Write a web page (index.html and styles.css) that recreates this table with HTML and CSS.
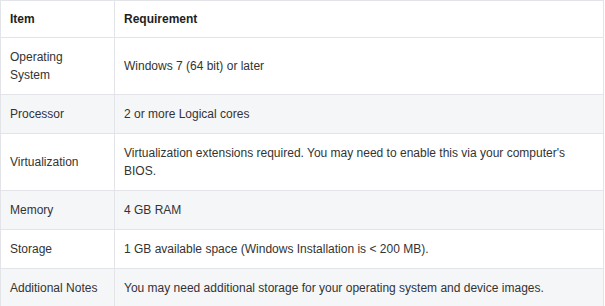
FILE: index.html
```html
<!DOCTYPE html>
<html lang="en">
<head>
  <meta charset="UTF-8">
  <title>System Requirements</title>
  <link rel="stylesheet" href="styles.css">
</head>
<body>
  <table class="req-table">
    <thead>
      <tr>
        <th class="col-item">Item</th>
        <th>Requirement</th>
      </tr>
    </thead>
    <tbody>
      <tr>
        <td>Operating System</td>
        <td>Windows 7 (64 bit) or later</td>
      </tr>
      <tr>
        <td>Processor</td>
        <td>2 or more Logical cores</td>
      </tr>
      <tr>
        <td>Virtualization</td>
        <td>Virtualization extensions required. You may need to enable this via your computer's BIOS.</td>
      </tr>
      <tr>
        <td>Memory</td>
        <td>4 GB RAM</td>
      </tr>
      <tr>
        <td>Storage</td>
        <td>1 GB available space (Windows Installation is &lt; 200 MB).</td>
      </tr>
      <tr>
        <td>Additional Notes</td>
        <td>You may need additional storage for your operating system and device images.</td>
      </tr>
    </tbody>
  </table>
</body>
</html>
```

FILE: styles.css
```css
body {
  margin: 0;
  background-color: #fff;
  font-family: "Liberation Sans", Arial, sans-serif;
  font-size: 12px;
  color: #333;
}
.req-table {
  width: 604px;
  border-collapse: collapse;
  line-height: 18px;
}
.req-table th,
.req-table td {
  border: 1px solid #e3e4e8;
  padding: 10px 9px;
  text-align: left;
  vertical-align: middle;
}
.req-table th {
  color: #1e1e1e;
  font-weight: bold;
  padding-top: 9px;
  padding-bottom: 9px;
}
.req-table .col-item {
  width: 95px;
}
.req-table tbody tr:nth-child(even) {
  background-color: #f5f6f8;
}
```
